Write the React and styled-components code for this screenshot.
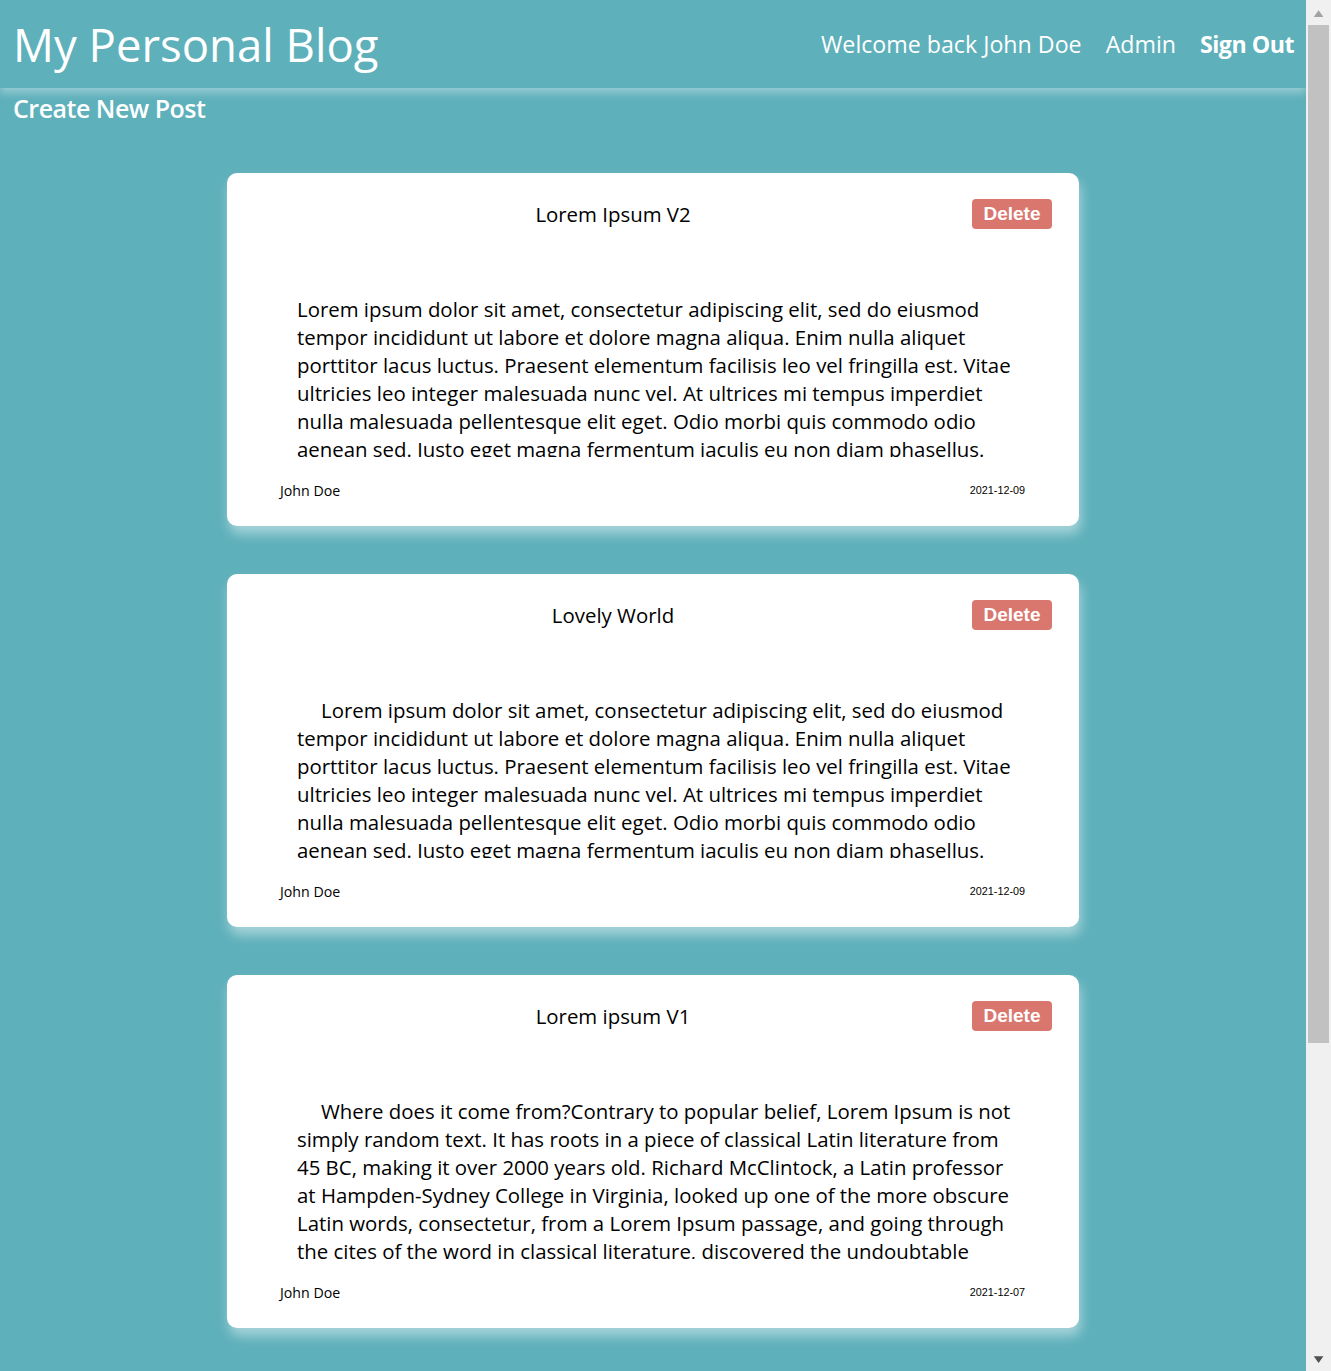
import React from "react";
import styled, { createGlobalStyle } from "styled-components";

const posts = [
  {
    id: 1,
    title: "Lorem Ipsum V2",
    indent: false,
    author: "John Doe",
    date: "2021-12-09",
    body:
      "Lorem ipsum dolor sit amet, consectetur adipiscing elit, sed do eiusmod tempor incididunt ut labore et dolore magna aliqua. Enim nulla aliquet porttitor lacus luctus. Praesent elementum facilisis leo vel fringilla est. Vitae ultricies leo integer malesuada nunc vel. At ultrices mi tempus imperdiet nulla malesuada pellentesque elit eget. Odio morbi quis commodo odio aenean sed. Justo eget magna fermentum iaculis eu non diam phasellus. Vestibulum lorem sed risus ultricies tristique nulla aliquet enim.",
  },
  {
    id: 2,
    title: "Lovely World",
    indent: true,
    author: "John Doe",
    date: "2021-12-09",
    body:
      "Lorem ipsum dolor sit amet, consectetur adipiscing elit, sed do eiusmod tempor incididunt ut labore et dolore magna aliqua. Enim nulla aliquet porttitor lacus luctus. Praesent elementum facilisis leo vel fringilla est. Vitae ultricies leo integer malesuada nunc vel. At ultrices mi tempus imperdiet nulla malesuada pellentesque elit eget. Odio morbi quis commodo odio aenean sed. Justo eget magna fermentum iaculis eu non diam phasellus. Vestibulum lorem sed risus ultricies tristique nulla aliquet enim.",
  },
  {
    id: 3,
    title: "Lorem ipsum V1",
    indent: true,
    author: "John Doe",
    date: "2021-12-07",
    body:
      "Where does it come from?Contrary to popular belief, Lorem Ipsum is not simply random text. It has roots in a piece of classical Latin literature from 45 BC, making it over 2000 years old. Richard McClintock, a Latin professor at Hampden-Sydney College in Virginia, looked up one of the more obscure Latin words, consectetur, from a Lorem Ipsum passage, and going through the cites of the word in classical literature, discovered the undoubtable source.",
  },
  {
    id: 4,
    title: "Hello Blog",
    indent: true,
    author: "John Doe",
    date: "2021-12-05",
    body:
      "Lorem ipsum dolor sit amet, consectetur adipiscing elit, sed do eiusmod tempor incididunt ut labore et dolore magna aliqua. Enim nulla aliquet porttitor lacus luctus. Praesent elementum facilisis leo vel fringilla est. Vitae ultricies leo integer malesuada nunc vel. At ultrices mi tempus imperdiet nulla malesuada pellentesque elit eget.",
  },
];

function App() {
  return (
    <Page>
      <GlobalStyle />
      <Header>
        <SiteTitle>My Personal Blog</SiteTitle>
        <Nav>
          <NavItem>Welcome back John Doe</NavItem>
          <NavItem>Admin</NavItem>
          <NavItem bold>Sign Out</NavItem>
        </Nav>
      </Header>
      <CreateLink>Create New Post</CreateLink>
      <PostList>
        {posts.map((post) => (
          <PostCard key={post.id}>
            <PostHeader>
              <PostTitle>{post.title}</PostTitle>
              <DeleteButton>Delete</DeleteButton>
            </PostHeader>
            <PostBody indent={post.indent}>{post.body}</PostBody>
            <PostFooter>
              <Author>{post.author}</Author>
              <PostDate>{post.date}</PostDate>
            </PostFooter>
          </PostCard>
        ))}
      </PostList>
      {/* window scrollbar, drawn since the headless browser hides it */}
      <ScrollTrack aria-hidden="true">
        <ScrollArrow muted>▲</ScrollArrow>
        <ScrollThumb />
        <ScrollArrow>▼</ScrollArrow>
      </ScrollTrack>
    </Page>
  );
}

const GlobalStyle = createGlobalStyle`
  body {
    margin: 0;
    background-color: #5eb0bb;
    font-family: "Open Sans", "Noto Sans", sans-serif;
  }
`;

const Page = styled.div`
  padding-right: 25px;
`;

const ScrollTrack = styled.div`
  position: fixed;
  top: 0;
  right: 0;
  bottom: 0;
  width: 25px;
  display: flex;
  flex-direction: column;
  background-color: #f0f0f0;
`;

const ScrollArrow = styled.div`
  height: 25px;
  display: flex;
  align-items: center;
  justify-content: center;
  font-family: "DejaVu Sans", sans-serif;
  font-size: 9px;
  color: ${(p) => (p.muted ? "#a3a3a3" : "#505050")};
  transform: scaleX(1.4);
`;

const ScrollThumb = styled.div`
  height: 1018px;
  margin: 0 2px;
  background-color: #c1c1c1;
  margin-bottom: auto;
`;

const Header = styled.header`
  display: flex;
  align-items: center;
  justify-content: space-between;
  height: 88px;
  padding: 0 12px 0 13px;
  box-shadow: 0 5px 8px rgba(255, 255, 255, 0.35);
`;

const SiteTitle = styled.h1`
  margin: 0;
  color: #fff;
  font-size: 45.5px;
  font-weight: 500;
`;

const Nav = styled.nav`
  display: flex;
  align-items: center;
  gap: 24px;
`;

const NavItem = styled.a`
  color: #fff;
  font-size: 23.2px;
  font-weight: ${(p) => (p.bold ? 700 : 400)};
  letter-spacing: ${(p) => (p.bold ? "-0.5px" : "0")};
  cursor: pointer;
`;

const CreateLink = styled.a`
  display: block;
  padding-left: 13px;
  height: 36px;
  line-height: 40px;
  color: #fff;
  font-size: 25px;
  font-weight: 600;
  letter-spacing: -0.5px;
  cursor: pointer;
`;

const PostList = styled.main`
  display: flex;
  flex-direction: column;
  align-items: center;
  gap: 48px;
  padding: 49px 0 48px;
`;

const PostCard = styled.article`
  box-sizing: border-box;
  width: 852px;
  padding: 26px 27px;
  background-color: #fff;
  border-radius: 10px;
  box-shadow: 2px 8px 12px rgba(255, 255, 255, 0.45);
`;

const PostHeader = styled.div`
  display: flex;
  align-items: center;
  height: 30px;
`;

const PostTitle = styled.h3`
  flex: 1;
  margin: 0;
  text-align: center;
  font-size: 20.4px;
  font-weight: 500;
  color: #000;
`;

const DeleteButton = styled.button`
  width: 80px;
  height: 30px;
  padding: 0;
  border: none;
  border-radius: 4px;
  background-color: #d9776f;
  color: #fff;
  font-family: "Liberation Sans", Arial, sans-serif;
  font-size: 19px;
  font-weight: 700;
  cursor: pointer;
`;

const PostBody = styled.p`
  height: 162px;
  overflow: hidden;
  margin: 66px 41px 0 43px;
  font-size: 20.4px;
  line-height: 28px;
  color: #000;
  text-indent: ${(p) => (p.indent ? "24px" : "0")};
`;

const PostFooter = styled.div`
  display: flex;
  align-items: center;
  justify-content: space-between;
  height: 20px;
  margin-top: 23px;
  padding: 0 27px 0 26px;
`;

const Author = styled.span`
  font-size: 14.2px;
  font-weight: 500;
  color: #000;
`;

const PostDate = styled.span`
  font-family: "Liberation Sans", Arial, sans-serif;
  font-size: 10.8px;
  color: #000;
`;

export default App;
